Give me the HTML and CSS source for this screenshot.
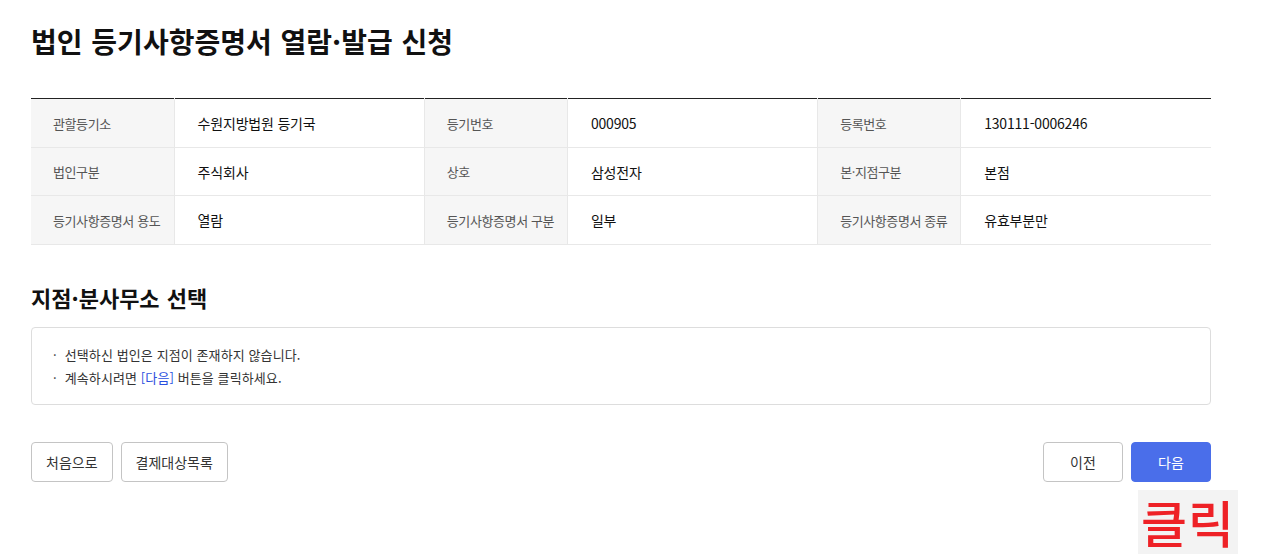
FILE: index.html
```html
<!DOCTYPE html>
<html lang="ko">
<head>
  <meta charset="UTF-8">
  <meta name="viewport" content="width=device-width, initial-scale=1.0">
  <title>법인 등기사항증명서 열람·발급 신청</title>
  <link rel="stylesheet" href="styles.css">
</head>
<body>
  <div class="page">
    <h1 class="title">법인 등기사항증명서 열람·발급 신청</h1>

    <table class="info-table">
      <colgroup>
        <col class="col-th"><col class="col-td">
        <col class="col-th"><col class="col-td">
        <col class="col-th"><col class="col-td">
      </colgroup>
      <tr>
        <th>관할등기소</th><td>수원지방법원 등기국</td>
        <th>등기번호</th><td>000905</td>
        <th>등록번호</th><td>130111-0006246</td>
      </tr>
      <tr>
        <th>법인구분</th><td>주식회사</td>
        <th>상호</th><td>삼성전자</td>
        <th>본·지점구분</th><td>본점</td>
      </tr>
      <tr>
        <th>등기사항증명서 용도</th><td>열람</td>
        <th>등기사항증명서 구분</th><td>일부</td>
        <th>등기사항증명서 종류</th><td>유효부분만</td>
      </tr>
    </table>

    <h2 class="sub-title">지점·분사무소 선택</h2>

    <div class="notice">
      <p>선택하신 법인은 지점이 존재하지 않습니다.</p>
      <p>계속하시려면 <span class="link">[다음]</span> 버튼을 클릭하세요.</p>
    </div>

    <div class="btn-area">
      <div class="left">
        <button class="btn">처음으로</button>
        <button class="btn">결제대상목록</button>
      </div>
      <div class="right">
        <button class="btn">이전</button>
        <button class="btn primary">다음</button>
      </div>
    </div>
  </div>

  <!-- 안내용 표시 -->
  <span class="click-tag">클릭</span>
</body>
</html>
```

FILE: styles.css
```css
body {
  margin: 0;
  background: #ffffff;
  color: #111111;
  font-family: "Noto Sans CJK KR", "Noto Sans", sans-serif;
}

.page {
  width: 1180px;
  padding: 21px 0 0 31px;
}

.title {
  margin: 0;
  font-size: 28px;
  font-weight: 700;
  line-height: 40px;
  color: #111111;
}

.title,
.sub-title {
  word-spacing: 1px;
}

.info-table {
  width: 100%;
  margin-top: 37px;
  border-collapse: collapse;
  table-layout: fixed;
  border-top: 1px solid #222222;
}

.col-th {
  width: 143px;
}

.col-td {
  width: 250px;
}

.info-table th,
.info-table td {
  height: 47px;
  padding: 0 0 0 23px;
  border-bottom: 1px solid #e8e8e8;
  text-align: left;
  vertical-align: middle;
}

/* 첫 줄, 마지막 줄은 1px 더 높음 */
.info-table tr:first-child th,
.info-table tr:first-child td,
.info-table tr:last-child th,
.info-table tr:last-child td {
  height: 48px;
}

.info-table th {
  padding-left: 22px;
  background: #f6f6f6;
  border-left: 1px solid #e8e8e8;
  border-right: 1px solid #e8e8e8;
  font-size: 13px;
  font-weight: 400;
  color: #555555;
  letter-spacing: -0.4px;
}

.info-table tr th:first-child {
  border-left: none;
}

.info-table td {
  font-size: 14px;
  color: #111111;
  letter-spacing: -0.2px;
}

.sub-title {
  margin: 37px 0 0;
  font-size: 22px;
  font-weight: 700;
  line-height: 30px;
}

.notice {
  margin-top: 15px;
  padding: 15px 21px;
  border: 1px solid #dddddd;
  border-radius: 4px;
}

.notice p {
  margin: 0;
  font-size: 13px;
  line-height: 23px;
  color: #333333;
  letter-spacing: 0.1px;
}

.notice p::before {
  content: "·";
  margin-right: 8px;
}

.link {
  color: #2a4fe0;
}

.btn-area {
  display: flex;
  justify-content: space-between;
  margin-top: 37px;
}

.left,
.right {
  display: flex;
  gap: 8px;
}

.btn {
  height: 40px;
  min-width: 80px;
  padding: 0 14px;
  border: 1px solid #c4c4c4;
  border-radius: 4px;
  background: #ffffff;
  font-family: inherit;
  font-size: 14px;
  color: #333333;
}

.btn.primary {
  background: #4a6eea;
  border-color: #4a6eea;
  color: #ffffff;
}

.click-tag {
  position: absolute;
  left: 1138px;
  top: 490px;
  width: 100px;
  height: 64px;
  background: #f3f3f3;
  color: #ee2126;
  font-size: 50px;
  font-weight: 500;
  line-height: 62px;
  text-align: center;
  letter-spacing: 1px;
  overflow: hidden;
}
```
